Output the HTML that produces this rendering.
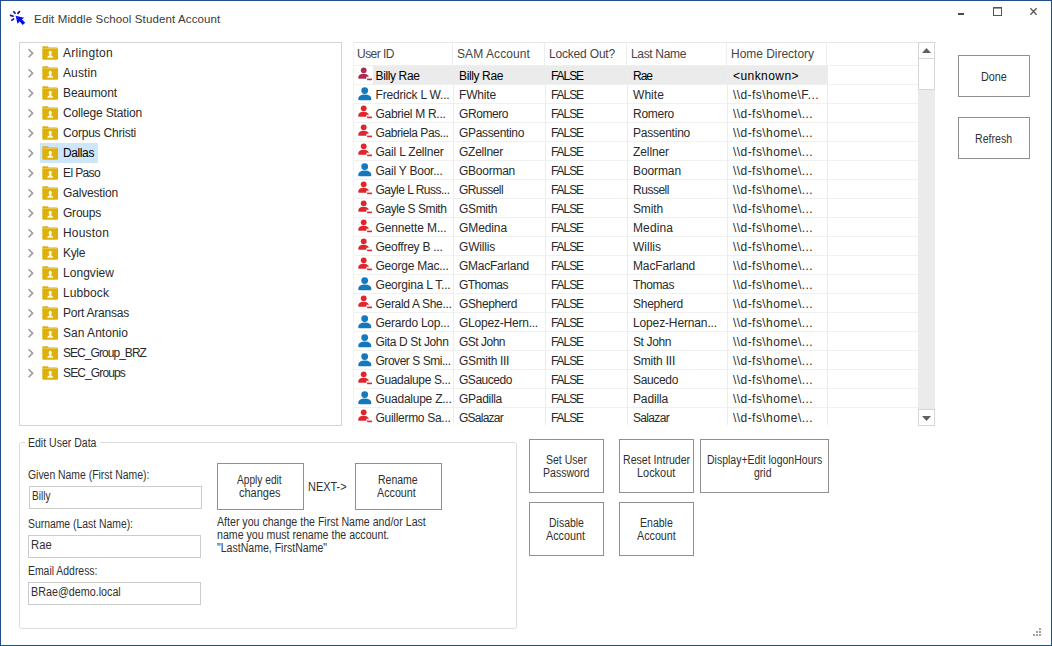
<!DOCTYPE html>
<html lang="en"><head><meta charset="utf-8"><title>Edit Middle School Student Account</title>
<style>
html,body{margin:0;padding:0;background:#fff;}
body{width:1052px;height:646px;overflow:hidden;position:relative;font-family:"Liberation Sans",sans-serif;}
div{box-sizing:border-box;}
#win{position:absolute;left:0;top:0;width:1052px;height:646px;border:1px solid #1f4d8d;background:#fff;}
.t{position:absolute;font-family:"Liberation Sans",sans-serif;line-height:16px;white-space:pre;transform-origin:0 0;}
.b{position:absolute;border:1px solid #909090;background:#fff;}
.i{position:absolute;border:1px solid #cccccc;background:#fff;}
.h{position:absolute;background:#f0f0f0;height:1px;}
.v{position:absolute;background:#ededed;width:1px;}
svg{position:absolute;overflow:visible;}
</style></head><body>
<div id="win"></div>
<svg style="left:0;top:0" width="40" height="30" viewBox="0 0 40 30">
<path d="M15.6 15.8 L24.2 17.7 L21.9 19.3 L25.2 22.7 L22.7 25.0 L19.7 21.6 L17.5 23.8 Z" fill="#0a0cf0"/>
<g stroke="#1212a8" stroke-width="1.7">
<line x1="13.3" y1="11.2" x2="15.5" y2="13.8"/><line x1="19.9" y1="11.2" x2="17.5" y2="13.8"/>
<line x1="10.0" y1="15.1" x2="13.7" y2="16.5"/><line x1="11.2" y1="20.6" x2="14.2" y2="18.6"/>
</g></svg>
<svg style="left:957px;top:5px" width="90" height="18" viewBox="0 0 90 18">
<rect x="1" y="8" width="6" height="2" fill="#4a4a4a"/>
<rect x="36.5" y="2.5" width="8" height="8" fill="none" stroke="#555" stroke-width="1"/><rect x="36" y="2" width="9" height="1.6" fill="#555"/>
<path d="M73.4 3.2 L79.6 9.8 M79.6 3.2 L73.4 9.8" stroke="#555" stroke-width="1.25" fill="none"/>
</svg>
<div style="position:absolute;left:19px;top:42px;width:323px;height:384px;border:1px solid #d4d4d4;background:#fff"></div>
<svg style="left:28px;top:49px" width="6" height="9" viewBox="0 0 6 9"><path d="M0.6 0.3 L4.6 4.3 L0.6 8.3" fill="none" stroke="#999" stroke-width="1.6"/></svg><svg style="left:42px;top:46px" width="16" height="14" viewBox="0 0 16 14"><path d="M0.3 1.2 Q0.3 0.2 1.3 0.2 H5.2 Q6 0.2 6.4 0.9 L6.8 1.6 H14.6 Q15.8 1.6 16 2.8 V12.8 Q16 13.8 15 13.8 H1.3 Q0.3 13.8 0.3 12.8 Z" fill="#deb00c"/><path d="M0.8 2.4 H15.2" stroke="#ecca55" stroke-width="0.9"/><ellipse cx="8.25" cy="6.7" rx="1.55" ry="1.9" fill="#fffbe8"/><path d="M5.2 11.8 Q5.3 9.7 7.2 9.4 L7.4 8 H9.1 L9.3 9.4 Q11.1 9.7 11.2 11.8 Z" fill="#fffbe8"/></svg>
<svg style="left:28px;top:69px" width="6" height="9" viewBox="0 0 6 9"><path d="M0.6 0.3 L4.6 4.3 L0.6 8.3" fill="none" stroke="#999" stroke-width="1.6"/></svg><svg style="left:42px;top:66px" width="16" height="14" viewBox="0 0 16 14"><path d="M0.3 1.2 Q0.3 0.2 1.3 0.2 H5.2 Q6 0.2 6.4 0.9 L6.8 1.6 H14.6 Q15.8 1.6 16 2.8 V12.8 Q16 13.8 15 13.8 H1.3 Q0.3 13.8 0.3 12.8 Z" fill="#deb00c"/><path d="M0.8 2.4 H15.2" stroke="#ecca55" stroke-width="0.9"/><ellipse cx="8.25" cy="6.7" rx="1.55" ry="1.9" fill="#fffbe8"/><path d="M5.2 11.8 Q5.3 9.7 7.2 9.4 L7.4 8 H9.1 L9.3 9.4 Q11.1 9.7 11.2 11.8 Z" fill="#fffbe8"/></svg>
<svg style="left:28px;top:89px" width="6" height="9" viewBox="0 0 6 9"><path d="M0.6 0.3 L4.6 4.3 L0.6 8.3" fill="none" stroke="#999" stroke-width="1.6"/></svg><svg style="left:42px;top:86px" width="16" height="14" viewBox="0 0 16 14"><path d="M0.3 1.2 Q0.3 0.2 1.3 0.2 H5.2 Q6 0.2 6.4 0.9 L6.8 1.6 H14.6 Q15.8 1.6 16 2.8 V12.8 Q16 13.8 15 13.8 H1.3 Q0.3 13.8 0.3 12.8 Z" fill="#deb00c"/><path d="M0.8 2.4 H15.2" stroke="#ecca55" stroke-width="0.9"/><ellipse cx="8.25" cy="6.7" rx="1.55" ry="1.9" fill="#fffbe8"/><path d="M5.2 11.8 Q5.3 9.7 7.2 9.4 L7.4 8 H9.1 L9.3 9.4 Q11.1 9.7 11.2 11.8 Z" fill="#fffbe8"/></svg>
<svg style="left:28px;top:109px" width="6" height="9" viewBox="0 0 6 9"><path d="M0.6 0.3 L4.6 4.3 L0.6 8.3" fill="none" stroke="#999" stroke-width="1.6"/></svg><svg style="left:42px;top:106px" width="16" height="14" viewBox="0 0 16 14"><path d="M0.3 1.2 Q0.3 0.2 1.3 0.2 H5.2 Q6 0.2 6.4 0.9 L6.8 1.6 H14.6 Q15.8 1.6 16 2.8 V12.8 Q16 13.8 15 13.8 H1.3 Q0.3 13.8 0.3 12.8 Z" fill="#deb00c"/><path d="M0.8 2.4 H15.2" stroke="#ecca55" stroke-width="0.9"/><ellipse cx="8.25" cy="6.7" rx="1.55" ry="1.9" fill="#fffbe8"/><path d="M5.2 11.8 Q5.3 9.7 7.2 9.4 L7.4 8 H9.1 L9.3 9.4 Q11.1 9.7 11.2 11.8 Z" fill="#fffbe8"/></svg>
<svg style="left:28px;top:129px" width="6" height="9" viewBox="0 0 6 9"><path d="M0.6 0.3 L4.6 4.3 L0.6 8.3" fill="none" stroke="#999" stroke-width="1.6"/></svg><svg style="left:42px;top:126px" width="16" height="14" viewBox="0 0 16 14"><path d="M0.3 1.2 Q0.3 0.2 1.3 0.2 H5.2 Q6 0.2 6.4 0.9 L6.8 1.6 H14.6 Q15.8 1.6 16 2.8 V12.8 Q16 13.8 15 13.8 H1.3 Q0.3 13.8 0.3 12.8 Z" fill="#deb00c"/><path d="M0.8 2.4 H15.2" stroke="#ecca55" stroke-width="0.9"/><ellipse cx="8.25" cy="6.7" rx="1.55" ry="1.9" fill="#fffbe8"/><path d="M5.2 11.8 Q5.3 9.7 7.2 9.4 L7.4 8 H9.1 L9.3 9.4 Q11.1 9.7 11.2 11.8 Z" fill="#fffbe8"/></svg>
<div style="position:absolute;left:40px;top:143px;width:58px;height:20px;background:#cde6f9"></div><svg style="left:28px;top:149px" width="6" height="9" viewBox="0 0 6 9"><path d="M0.6 0.3 L4.6 4.3 L0.6 8.3" fill="none" stroke="#999" stroke-width="1.6"/></svg><svg style="left:42px;top:146px" width="16" height="14" viewBox="0 0 16 14"><path d="M0.3 1.2 Q0.3 0.2 1.3 0.2 H5.2 Q6 0.2 6.4 0.9 L6.8 1.6 H14.6 Q15.8 1.6 16 2.8 V12.8 Q16 13.8 15 13.8 H1.3 Q0.3 13.8 0.3 12.8 Z" fill="#deb00c"/><path d="M0.8 2.4 H15.2" stroke="#ecca55" stroke-width="0.9"/><ellipse cx="8.25" cy="6.7" rx="1.55" ry="1.9" fill="#fffbe8"/><path d="M5.2 11.8 Q5.3 9.7 7.2 9.4 L7.4 8 H9.1 L9.3 9.4 Q11.1 9.7 11.2 11.8 Z" fill="#fffbe8"/></svg>
<svg style="left:28px;top:169px" width="6" height="9" viewBox="0 0 6 9"><path d="M0.6 0.3 L4.6 4.3 L0.6 8.3" fill="none" stroke="#999" stroke-width="1.6"/></svg><svg style="left:42px;top:166px" width="16" height="14" viewBox="0 0 16 14"><path d="M0.3 1.2 Q0.3 0.2 1.3 0.2 H5.2 Q6 0.2 6.4 0.9 L6.8 1.6 H14.6 Q15.8 1.6 16 2.8 V12.8 Q16 13.8 15 13.8 H1.3 Q0.3 13.8 0.3 12.8 Z" fill="#deb00c"/><path d="M0.8 2.4 H15.2" stroke="#ecca55" stroke-width="0.9"/><ellipse cx="8.25" cy="6.7" rx="1.55" ry="1.9" fill="#fffbe8"/><path d="M5.2 11.8 Q5.3 9.7 7.2 9.4 L7.4 8 H9.1 L9.3 9.4 Q11.1 9.7 11.2 11.8 Z" fill="#fffbe8"/></svg>
<svg style="left:28px;top:189px" width="6" height="9" viewBox="0 0 6 9"><path d="M0.6 0.3 L4.6 4.3 L0.6 8.3" fill="none" stroke="#999" stroke-width="1.6"/></svg><svg style="left:42px;top:186px" width="16" height="14" viewBox="0 0 16 14"><path d="M0.3 1.2 Q0.3 0.2 1.3 0.2 H5.2 Q6 0.2 6.4 0.9 L6.8 1.6 H14.6 Q15.8 1.6 16 2.8 V12.8 Q16 13.8 15 13.8 H1.3 Q0.3 13.8 0.3 12.8 Z" fill="#deb00c"/><path d="M0.8 2.4 H15.2" stroke="#ecca55" stroke-width="0.9"/><ellipse cx="8.25" cy="6.7" rx="1.55" ry="1.9" fill="#fffbe8"/><path d="M5.2 11.8 Q5.3 9.7 7.2 9.4 L7.4 8 H9.1 L9.3 9.4 Q11.1 9.7 11.2 11.8 Z" fill="#fffbe8"/></svg>
<svg style="left:28px;top:209px" width="6" height="9" viewBox="0 0 6 9"><path d="M0.6 0.3 L4.6 4.3 L0.6 8.3" fill="none" stroke="#999" stroke-width="1.6"/></svg><svg style="left:42px;top:206px" width="16" height="14" viewBox="0 0 16 14"><path d="M0.3 1.2 Q0.3 0.2 1.3 0.2 H5.2 Q6 0.2 6.4 0.9 L6.8 1.6 H14.6 Q15.8 1.6 16 2.8 V12.8 Q16 13.8 15 13.8 H1.3 Q0.3 13.8 0.3 12.8 Z" fill="#deb00c"/><path d="M0.8 2.4 H15.2" stroke="#ecca55" stroke-width="0.9"/><ellipse cx="8.25" cy="6.7" rx="1.55" ry="1.9" fill="#fffbe8"/><path d="M5.2 11.8 Q5.3 9.7 7.2 9.4 L7.4 8 H9.1 L9.3 9.4 Q11.1 9.7 11.2 11.8 Z" fill="#fffbe8"/></svg>
<svg style="left:28px;top:229px" width="6" height="9" viewBox="0 0 6 9"><path d="M0.6 0.3 L4.6 4.3 L0.6 8.3" fill="none" stroke="#999" stroke-width="1.6"/></svg><svg style="left:42px;top:226px" width="16" height="14" viewBox="0 0 16 14"><path d="M0.3 1.2 Q0.3 0.2 1.3 0.2 H5.2 Q6 0.2 6.4 0.9 L6.8 1.6 H14.6 Q15.8 1.6 16 2.8 V12.8 Q16 13.8 15 13.8 H1.3 Q0.3 13.8 0.3 12.8 Z" fill="#deb00c"/><path d="M0.8 2.4 H15.2" stroke="#ecca55" stroke-width="0.9"/><ellipse cx="8.25" cy="6.7" rx="1.55" ry="1.9" fill="#fffbe8"/><path d="M5.2 11.8 Q5.3 9.7 7.2 9.4 L7.4 8 H9.1 L9.3 9.4 Q11.1 9.7 11.2 11.8 Z" fill="#fffbe8"/></svg>
<svg style="left:28px;top:249px" width="6" height="9" viewBox="0 0 6 9"><path d="M0.6 0.3 L4.6 4.3 L0.6 8.3" fill="none" stroke="#999" stroke-width="1.6"/></svg><svg style="left:42px;top:246px" width="16" height="14" viewBox="0 0 16 14"><path d="M0.3 1.2 Q0.3 0.2 1.3 0.2 H5.2 Q6 0.2 6.4 0.9 L6.8 1.6 H14.6 Q15.8 1.6 16 2.8 V12.8 Q16 13.8 15 13.8 H1.3 Q0.3 13.8 0.3 12.8 Z" fill="#deb00c"/><path d="M0.8 2.4 H15.2" stroke="#ecca55" stroke-width="0.9"/><ellipse cx="8.25" cy="6.7" rx="1.55" ry="1.9" fill="#fffbe8"/><path d="M5.2 11.8 Q5.3 9.7 7.2 9.4 L7.4 8 H9.1 L9.3 9.4 Q11.1 9.7 11.2 11.8 Z" fill="#fffbe8"/></svg>
<svg style="left:28px;top:269px" width="6" height="9" viewBox="0 0 6 9"><path d="M0.6 0.3 L4.6 4.3 L0.6 8.3" fill="none" stroke="#999" stroke-width="1.6"/></svg><svg style="left:42px;top:266px" width="16" height="14" viewBox="0 0 16 14"><path d="M0.3 1.2 Q0.3 0.2 1.3 0.2 H5.2 Q6 0.2 6.4 0.9 L6.8 1.6 H14.6 Q15.8 1.6 16 2.8 V12.8 Q16 13.8 15 13.8 H1.3 Q0.3 13.8 0.3 12.8 Z" fill="#deb00c"/><path d="M0.8 2.4 H15.2" stroke="#ecca55" stroke-width="0.9"/><ellipse cx="8.25" cy="6.7" rx="1.55" ry="1.9" fill="#fffbe8"/><path d="M5.2 11.8 Q5.3 9.7 7.2 9.4 L7.4 8 H9.1 L9.3 9.4 Q11.1 9.7 11.2 11.8 Z" fill="#fffbe8"/></svg>
<svg style="left:28px;top:289px" width="6" height="9" viewBox="0 0 6 9"><path d="M0.6 0.3 L4.6 4.3 L0.6 8.3" fill="none" stroke="#999" stroke-width="1.6"/></svg><svg style="left:42px;top:286px" width="16" height="14" viewBox="0 0 16 14"><path d="M0.3 1.2 Q0.3 0.2 1.3 0.2 H5.2 Q6 0.2 6.4 0.9 L6.8 1.6 H14.6 Q15.8 1.6 16 2.8 V12.8 Q16 13.8 15 13.8 H1.3 Q0.3 13.8 0.3 12.8 Z" fill="#deb00c"/><path d="M0.8 2.4 H15.2" stroke="#ecca55" stroke-width="0.9"/><ellipse cx="8.25" cy="6.7" rx="1.55" ry="1.9" fill="#fffbe8"/><path d="M5.2 11.8 Q5.3 9.7 7.2 9.4 L7.4 8 H9.1 L9.3 9.4 Q11.1 9.7 11.2 11.8 Z" fill="#fffbe8"/></svg>
<svg style="left:28px;top:309px" width="6" height="9" viewBox="0 0 6 9"><path d="M0.6 0.3 L4.6 4.3 L0.6 8.3" fill="none" stroke="#999" stroke-width="1.6"/></svg><svg style="left:42px;top:306px" width="16" height="14" viewBox="0 0 16 14"><path d="M0.3 1.2 Q0.3 0.2 1.3 0.2 H5.2 Q6 0.2 6.4 0.9 L6.8 1.6 H14.6 Q15.8 1.6 16 2.8 V12.8 Q16 13.8 15 13.8 H1.3 Q0.3 13.8 0.3 12.8 Z" fill="#deb00c"/><path d="M0.8 2.4 H15.2" stroke="#ecca55" stroke-width="0.9"/><ellipse cx="8.25" cy="6.7" rx="1.55" ry="1.9" fill="#fffbe8"/><path d="M5.2 11.8 Q5.3 9.7 7.2 9.4 L7.4 8 H9.1 L9.3 9.4 Q11.1 9.7 11.2 11.8 Z" fill="#fffbe8"/></svg>
<svg style="left:28px;top:329px" width="6" height="9" viewBox="0 0 6 9"><path d="M0.6 0.3 L4.6 4.3 L0.6 8.3" fill="none" stroke="#999" stroke-width="1.6"/></svg><svg style="left:42px;top:326px" width="16" height="14" viewBox="0 0 16 14"><path d="M0.3 1.2 Q0.3 0.2 1.3 0.2 H5.2 Q6 0.2 6.4 0.9 L6.8 1.6 H14.6 Q15.8 1.6 16 2.8 V12.8 Q16 13.8 15 13.8 H1.3 Q0.3 13.8 0.3 12.8 Z" fill="#deb00c"/><path d="M0.8 2.4 H15.2" stroke="#ecca55" stroke-width="0.9"/><ellipse cx="8.25" cy="6.7" rx="1.55" ry="1.9" fill="#fffbe8"/><path d="M5.2 11.8 Q5.3 9.7 7.2 9.4 L7.4 8 H9.1 L9.3 9.4 Q11.1 9.7 11.2 11.8 Z" fill="#fffbe8"/></svg>
<svg style="left:28px;top:349px" width="6" height="9" viewBox="0 0 6 9"><path d="M0.6 0.3 L4.6 4.3 L0.6 8.3" fill="none" stroke="#999" stroke-width="1.6"/></svg><svg style="left:42px;top:346px" width="16" height="14" viewBox="0 0 16 14"><path d="M0.3 1.2 Q0.3 0.2 1.3 0.2 H5.2 Q6 0.2 6.4 0.9 L6.8 1.6 H14.6 Q15.8 1.6 16 2.8 V12.8 Q16 13.8 15 13.8 H1.3 Q0.3 13.8 0.3 12.8 Z" fill="#deb00c"/><path d="M0.8 2.4 H15.2" stroke="#ecca55" stroke-width="0.9"/><ellipse cx="8.25" cy="6.7" rx="1.55" ry="1.9" fill="#fffbe8"/><path d="M5.2 11.8 Q5.3 9.7 7.2 9.4 L7.4 8 H9.1 L9.3 9.4 Q11.1 9.7 11.2 11.8 Z" fill="#fffbe8"/></svg>
<svg style="left:28px;top:369px" width="6" height="9" viewBox="0 0 6 9"><path d="M0.6 0.3 L4.6 4.3 L0.6 8.3" fill="none" stroke="#999" stroke-width="1.6"/></svg><svg style="left:42px;top:366px" width="16" height="14" viewBox="0 0 16 14"><path d="M0.3 1.2 Q0.3 0.2 1.3 0.2 H5.2 Q6 0.2 6.4 0.9 L6.8 1.6 H14.6 Q15.8 1.6 16 2.8 V12.8 Q16 13.8 15 13.8 H1.3 Q0.3 13.8 0.3 12.8 Z" fill="#deb00c"/><path d="M0.8 2.4 H15.2" stroke="#ecca55" stroke-width="0.9"/><ellipse cx="8.25" cy="6.7" rx="1.55" ry="1.9" fill="#fffbe8"/><path d="M5.2 11.8 Q5.3 9.7 7.2 9.4 L7.4 8 H9.1 L9.3 9.4 Q11.1 9.7 11.2 11.8 Z" fill="#fffbe8"/></svg>
<div style="position:absolute;left:353px;top:42px;width:583px;height:385px;border-top:1px solid #e8e8e8;border-left:1px solid #f3f3f3;background:#fff"></div>
<div style="position:absolute;left:373px;top:66px;width:454px;height:18px;background:#ebebeb"></div>
<div class="h" style="left:354px;top:65px;width:564px"></div><div class="h" style="left:354px;top:84px;width:564px"></div><div class="h" style="left:354px;top:103px;width:564px"></div><div class="h" style="left:354px;top:122px;width:564px"></div><div class="h" style="left:354px;top:141px;width:564px"></div><div class="h" style="left:354px;top:160px;width:564px"></div><div class="h" style="left:354px;top:179px;width:564px"></div><div class="h" style="left:354px;top:198px;width:564px"></div><div class="h" style="left:354px;top:217px;width:564px"></div><div class="h" style="left:354px;top:236px;width:564px"></div><div class="h" style="left:354px;top:255px;width:564px"></div><div class="h" style="left:354px;top:274px;width:564px"></div><div class="h" style="left:354px;top:293px;width:564px"></div><div class="h" style="left:354px;top:312px;width:564px"></div><div class="h" style="left:354px;top:331px;width:564px"></div><div class="h" style="left:354px;top:350px;width:564px"></div><div class="h" style="left:354px;top:369px;width:564px"></div><div class="h" style="left:354px;top:388px;width:564px"></div><div class="h" style="left:354px;top:407px;width:564px"></div><div class="v" style="left:452px;top:43px;height:22px"></div><div class="v" style="left:453px;top:65px;height:360px"></div><div class="v" style="left:544px;top:43px;height:22px"></div><div class="v" style="left:545px;top:65px;height:360px"></div><div class="v" style="left:626px;top:43px;height:22px"></div><div class="v" style="left:627px;top:65px;height:360px"></div><div class="v" style="left:726px;top:43px;height:22px"></div><div class="v" style="left:727px;top:65px;height:360px"></div><div class="v" style="left:826px;top:43px;height:22px"></div><div class="v" style="left:827px;top:65px;height:360px"></div>
<svg style="left:357px;top:66px" width="16" height="16" viewBox="0 0 16 16"><circle cx="6.7" cy="4.3" r="2.9" fill="#ab2c52"/><path d="M1.2 11.8 Q1.4 7.8 6.7 7.8 Q10.8 7.8 12 10.8 H9.4 V12.8 H2 Q1.2 12.8 1.2 11.8 Z" fill="#ab2c52"/><rect x="10.1" y="12.6" width="4.9" height="1.6" fill="#ab2c52"/></svg><svg style="left:357px;top:85px" width="16" height="16" viewBox="0 0 16 16"><circle cx="7.7" cy="5.6" r="3.4" fill="#1478be"/><path d="M1.2 14 Q1.4 9.4 7.8 9.4 Q14.2 9.4 14.4 14 Q14.4 15.3 13 15.3 H2.6 Q1.2 15.3 1.2 14 Z" fill="#1478be"/></svg><svg style="left:357px;top:104px" width="16" height="16" viewBox="0 0 16 16"><circle cx="6.7" cy="4.3" r="2.9" fill="#e0262c"/><path d="M1.2 11.8 Q1.4 7.8 6.7 7.8 Q10.8 7.8 12 10.8 H9.4 V12.8 H2 Q1.2 12.8 1.2 11.8 Z" fill="#e0262c"/><rect x="10.1" y="12.6" width="4.9" height="1.6" fill="#e0262c"/></svg><svg style="left:357px;top:123px" width="16" height="16" viewBox="0 0 16 16"><circle cx="6.7" cy="4.3" r="2.9" fill="#e0262c"/><path d="M1.2 11.8 Q1.4 7.8 6.7 7.8 Q10.8 7.8 12 10.8 H9.4 V12.8 H2 Q1.2 12.8 1.2 11.8 Z" fill="#e0262c"/><rect x="10.1" y="12.6" width="4.9" height="1.6" fill="#e0262c"/></svg><svg style="left:357px;top:142px" width="16" height="16" viewBox="0 0 16 16"><circle cx="6.7" cy="4.3" r="2.9" fill="#e0262c"/><path d="M1.2 11.8 Q1.4 7.8 6.7 7.8 Q10.8 7.8 12 10.8 H9.4 V12.8 H2 Q1.2 12.8 1.2 11.8 Z" fill="#e0262c"/><rect x="10.1" y="12.6" width="4.9" height="1.6" fill="#e0262c"/></svg><svg style="left:357px;top:161px" width="16" height="16" viewBox="0 0 16 16"><circle cx="7.7" cy="5.6" r="3.4" fill="#1478be"/><path d="M1.2 14 Q1.4 9.4 7.8 9.4 Q14.2 9.4 14.4 14 Q14.4 15.3 13 15.3 H2.6 Q1.2 15.3 1.2 14 Z" fill="#1478be"/></svg><svg style="left:357px;top:180px" width="16" height="16" viewBox="0 0 16 16"><circle cx="6.7" cy="4.3" r="2.9" fill="#e0262c"/><path d="M1.2 11.8 Q1.4 7.8 6.7 7.8 Q10.8 7.8 12 10.8 H9.4 V12.8 H2 Q1.2 12.8 1.2 11.8 Z" fill="#e0262c"/><rect x="10.1" y="12.6" width="4.9" height="1.6" fill="#e0262c"/></svg><svg style="left:357px;top:199px" width="16" height="16" viewBox="0 0 16 16"><circle cx="6.7" cy="4.3" r="2.9" fill="#e0262c"/><path d="M1.2 11.8 Q1.4 7.8 6.7 7.8 Q10.8 7.8 12 10.8 H9.4 V12.8 H2 Q1.2 12.8 1.2 11.8 Z" fill="#e0262c"/><rect x="10.1" y="12.6" width="4.9" height="1.6" fill="#e0262c"/></svg><svg style="left:357px;top:218px" width="16" height="16" viewBox="0 0 16 16"><circle cx="6.7" cy="4.3" r="2.9" fill="#e0262c"/><path d="M1.2 11.8 Q1.4 7.8 6.7 7.8 Q10.8 7.8 12 10.8 H9.4 V12.8 H2 Q1.2 12.8 1.2 11.8 Z" fill="#e0262c"/><rect x="10.1" y="12.6" width="4.9" height="1.6" fill="#e0262c"/></svg><svg style="left:357px;top:237px" width="16" height="16" viewBox="0 0 16 16"><circle cx="6.7" cy="4.3" r="2.9" fill="#e0262c"/><path d="M1.2 11.8 Q1.4 7.8 6.7 7.8 Q10.8 7.8 12 10.8 H9.4 V12.8 H2 Q1.2 12.8 1.2 11.8 Z" fill="#e0262c"/><rect x="10.1" y="12.6" width="4.9" height="1.6" fill="#e0262c"/></svg><svg style="left:357px;top:256px" width="16" height="16" viewBox="0 0 16 16"><circle cx="6.7" cy="4.3" r="2.9" fill="#e0262c"/><path d="M1.2 11.8 Q1.4 7.8 6.7 7.8 Q10.8 7.8 12 10.8 H9.4 V12.8 H2 Q1.2 12.8 1.2 11.8 Z" fill="#e0262c"/><rect x="10.1" y="12.6" width="4.9" height="1.6" fill="#e0262c"/></svg><svg style="left:357px;top:275px" width="16" height="16" viewBox="0 0 16 16"><circle cx="7.7" cy="5.6" r="3.4" fill="#1478be"/><path d="M1.2 14 Q1.4 9.4 7.8 9.4 Q14.2 9.4 14.4 14 Q14.4 15.3 13 15.3 H2.6 Q1.2 15.3 1.2 14 Z" fill="#1478be"/></svg><svg style="left:357px;top:294px" width="16" height="16" viewBox="0 0 16 16"><circle cx="6.7" cy="4.3" r="2.9" fill="#e0262c"/><path d="M1.2 11.8 Q1.4 7.8 6.7 7.8 Q10.8 7.8 12 10.8 H9.4 V12.8 H2 Q1.2 12.8 1.2 11.8 Z" fill="#e0262c"/><rect x="10.1" y="12.6" width="4.9" height="1.6" fill="#e0262c"/></svg><svg style="left:357px;top:313px" width="16" height="16" viewBox="0 0 16 16"><circle cx="7.7" cy="5.6" r="3.4" fill="#1478be"/><path d="M1.2 14 Q1.4 9.4 7.8 9.4 Q14.2 9.4 14.4 14 Q14.4 15.3 13 15.3 H2.6 Q1.2 15.3 1.2 14 Z" fill="#1478be"/></svg><svg style="left:357px;top:332px" width="16" height="16" viewBox="0 0 16 16"><circle cx="7.7" cy="5.6" r="3.4" fill="#1478be"/><path d="M1.2 14 Q1.4 9.4 7.8 9.4 Q14.2 9.4 14.4 14 Q14.4 15.3 13 15.3 H2.6 Q1.2 15.3 1.2 14 Z" fill="#1478be"/></svg><svg style="left:357px;top:351px" width="16" height="16" viewBox="0 0 16 16"><circle cx="7.7" cy="5.6" r="3.4" fill="#1478be"/><path d="M1.2 14 Q1.4 9.4 7.8 9.4 Q14.2 9.4 14.4 14 Q14.4 15.3 13 15.3 H2.6 Q1.2 15.3 1.2 14 Z" fill="#1478be"/></svg><svg style="left:357px;top:370px" width="16" height="16" viewBox="0 0 16 16"><circle cx="6.7" cy="4.3" r="2.9" fill="#e0262c"/><path d="M1.2 11.8 Q1.4 7.8 6.7 7.8 Q10.8 7.8 12 10.8 H9.4 V12.8 H2 Q1.2 12.8 1.2 11.8 Z" fill="#e0262c"/><rect x="10.1" y="12.6" width="4.9" height="1.6" fill="#e0262c"/></svg><svg style="left:357px;top:389px" width="16" height="16" viewBox="0 0 16 16"><circle cx="7.7" cy="5.6" r="3.4" fill="#1478be"/><path d="M1.2 14 Q1.4 9.4 7.8 9.4 Q14.2 9.4 14.4 14 Q14.4 15.3 13 15.3 H2.6 Q1.2 15.3 1.2 14 Z" fill="#1478be"/></svg><svg style="left:357px;top:408px" width="16" height="16" viewBox="0 0 16 16"><circle cx="6.7" cy="4.3" r="2.9" fill="#e0262c"/><path d="M1.2 11.8 Q1.4 7.8 6.7 7.8 Q10.8 7.8 12 10.8 H9.4 V12.8 H2 Q1.2 12.8 1.2 11.8 Z" fill="#e0262c"/><rect x="10.1" y="12.6" width="4.9" height="1.6" fill="#e0262c"/></svg>
<div style="position:absolute;left:918px;top:43px;width:17px;height:383px;background:#ebebeb"></div>
<div style="position:absolute;left:918px;top:42px;width:17px;height:17px;background:#fff;border:1px solid #d6d6d6"></div>
<div style="position:absolute;left:918px;top:58px;width:17px;height:32px;background:#fff;border:1px solid #d6d6d6"></div>
<div style="position:absolute;left:918px;top:409px;width:17px;height:17px;background:#fff;border:1px solid #d6d6d6"></div>
<svg style="left:922px;top:48px" width="9" height="5" viewBox="0 0 9 5"><path d="M0 5 L4.5 0 L9 5 Z" fill="#606060"/></svg>
<svg style="left:922px;top:416px" width="9" height="5" viewBox="0 0 9 5"><path d="M0 0 L4.5 5 L9 0 Z" fill="#606060"/></svg>
<div class="b" style="left:958px;top:55px;width:72px;height:42px"></div><div class="b" style="left:958px;top:117px;width:72px;height:42px"></div>
<div style="position:absolute;left:19px;top:442px;width:498px;height:187px;border:1px solid #dcdcdc;border-radius:3px"></div>
<div style="position:absolute;left:25px;top:438px;width:75px;height:10px;background:#fff"></div>
<div class="i" style="left:29px;top:486px;width:173px;height:23px"></div><div class="i" style="left:28px;top:535px;width:173px;height:23px"></div><div class="i" style="left:28px;top:582px;width:173px;height:23px"></div>
<div class="b" style="left:217px;top:463px;width:87px;height:47px"></div><div class="b" style="left:355px;top:463px;width:87px;height:47px"></div><div class="b" style="left:529px;top:439px;width:75px;height:54px"></div><div class="b" style="left:619px;top:439px;width:75px;height:54px"></div><div class="b" style="left:700px;top:439px;width:129px;height:54px"></div><div class="b" style="left:529px;top:502px;width:75px;height:54px"></div><div class="b" style="left:619px;top:502px;width:75px;height:54px"></div>
<div class="t" style="left:34.10px;top:11px;font-size:11.5px;letter-spacing:0.120px;color:#3a3a3a">Edit Middle School Student Account</div>
<div class="t" style="left:63.00px;top:45px;font-size:12px;letter-spacing:0.292px;color:#2a2a2a">Arlington</div>
<div class="t" style="left:63.00px;top:65px;font-size:12px;letter-spacing:0.107px;color:#2a2a2a">Austin</div>
<div class="t" style="left:63.00px;top:85px;font-size:12px;letter-spacing:-0.088px;color:#2a2a2a">Beaumont</div>
<div class="t" style="left:63.00px;top:105px;font-size:12px;letter-spacing:-0.159px;color:#2a2a2a">College Station</div>
<div class="t" style="left:63.00px;top:125px;font-size:12px;letter-spacing:-0.217px;color:#2a2a2a">Corpus Christi</div>
<div class="t" style="left:63.00px;top:145px;font-size:12px;letter-spacing:-0.393px;color:#000">Dallas</div>
<div class="t" style="left:63.00px;top:165px;font-size:12px;letter-spacing:-0.623px;color:#2a2a2a">El Paso</div>
<div class="t" style="left:63.00px;top:185px;font-size:12px;letter-spacing:-0.170px;color:#2a2a2a">Galvestion</div>
<div class="t" style="left:63.00px;top:205px;font-size:12px;letter-spacing:-0.227px;color:#2a2a2a">Groups</div>
<div class="t" style="left:63.00px;top:225px;font-size:12px;letter-spacing:0.185px;color:#2a2a2a">Houston</div>
<div class="t" style="left:63.00px;top:245px;font-size:12px;letter-spacing:-0.336px;color:#2a2a2a">Kyle</div>
<div class="t" style="left:63.00px;top:265px;font-size:12px;letter-spacing:0.037px;color:#2a2a2a">Longview</div>
<div class="t" style="left:63.00px;top:285px;font-size:12px;letter-spacing:0.089px;color:#2a2a2a">Lubbock</div>
<div class="t" style="left:63.00px;top:305px;font-size:12px;letter-spacing:-0.225px;color:#2a2a2a">Port Aransas</div>
<div class="t" style="left:63.00px;top:325px;font-size:12px;letter-spacing:0.024px;color:#2a2a2a">San Antonio</div>
<div class="t" style="left:63.00px;top:345px;font-size:12px;letter-spacing:-0.952px;color:#2a2a2a">SEC_Group_BRZ</div>
<div class="t" style="left:63.00px;top:365px;font-size:12px;letter-spacing:-0.870px;color:#2a2a2a">SEC_Groups</div>
<div class="t" style="left:357.00px;top:46px;font-size:12px;letter-spacing:-0.525px;color:#454545">User ID</div>
<div class="t" style="left:457.00px;top:46px;font-size:12px;letter-spacing:0.087px;color:#454545">SAM Account</div>
<div class="t" style="left:549.00px;top:46px;font-size:12px;letter-spacing:-0.186px;color:#454545">Locked Out?</div>
<div class="t" style="left:631.00px;top:46px;font-size:12px;letter-spacing:-0.337px;color:#454545">Last Name</div>
<div class="t" style="left:731.00px;top:46px;font-size:12px;letter-spacing:-0.026px;color:#454545">Home Directory</div>
<div class="t" style="left:375.50px;top:68px;font-size:12px;letter-spacing:-0.373px;color:#000">Billy Rae</div>
<div class="t" style="left:459.00px;top:68px;font-size:12px;letter-spacing:-0.373px;color:#000">Billy Rae</div>
<div class="t" style="left:551.00px;top:68px;font-size:12px;letter-spacing:-1.072px;color:#000">FALSE</div>
<div class="t" style="left:633.00px;top:68px;font-size:12px;letter-spacing:-1.005px;color:#000">Rae</div>
<div class="t" style="left:733.00px;top:68px;font-size:12px;letter-spacing:0.438px;color:#000">&lt;unknown&gt;</div>
<div class="t" style="left:375.50px;top:87px;font-size:12px;letter-spacing:-0.194px;color:#2a2a2a">Fredrick L W...</div>
<div class="t" style="left:459.00px;top:87px;font-size:12px;letter-spacing:-0.169px;color:#2a2a2a">FWhite</div>
<div class="t" style="left:551.00px;top:87px;font-size:12px;letter-spacing:-1.072px;color:#2a2a2a">FALSE</div>
<div class="t" style="left:633.00px;top:87px;font-size:12px;letter-spacing:0.062px;color:#2a2a2a">White</div>
<div class="t" style="left:733.00px;top:87px;font-size:12px;letter-spacing:0.415px;color:#2a2a2a">\\d-fs\home\F...</div>
<div class="t" style="left:375.50px;top:106px;font-size:12px;letter-spacing:-0.287px;color:#2a2a2a">Gabriel M R...</div>
<div class="t" style="left:459.00px;top:106px;font-size:12px;letter-spacing:-0.431px;color:#2a2a2a">GRomero</div>
<div class="t" style="left:551.00px;top:106px;font-size:12px;letter-spacing:-1.072px;color:#2a2a2a">FALSE</div>
<div class="t" style="left:633.00px;top:106px;font-size:12px;letter-spacing:-0.281px;color:#2a2a2a">Romero</div>
<div class="t" style="left:733.00px;top:106px;font-size:12px;letter-spacing:0.443px;color:#2a2a2a">\\d-fs\home\...</div>
<div class="t" style="left:375.50px;top:125px;font-size:12px;letter-spacing:-0.425px;color:#2a2a2a">Gabriela Pas...</div>
<div class="t" style="left:459.00px;top:125px;font-size:12px;letter-spacing:-0.338px;color:#2a2a2a">GPassentino</div>
<div class="t" style="left:551.00px;top:125px;font-size:12px;letter-spacing:-1.072px;color:#2a2a2a">FALSE</div>
<div class="t" style="left:633.00px;top:125px;font-size:12px;letter-spacing:-0.237px;color:#2a2a2a">Passentino</div>
<div class="t" style="left:733.00px;top:125px;font-size:12px;letter-spacing:0.443px;color:#2a2a2a">\\d-fs\home\...</div>
<div class="t" style="left:375.50px;top:144px;font-size:12px;letter-spacing:-0.209px;color:#2a2a2a">Gail L Zellner</div>
<div class="t" style="left:459.00px;top:144px;font-size:12px;letter-spacing:-0.252px;color:#2a2a2a">GZellner</div>
<div class="t" style="left:551.00px;top:144px;font-size:12px;letter-spacing:-1.072px;color:#2a2a2a">FALSE</div>
<div class="t" style="left:633.00px;top:144px;font-size:12px;letter-spacing:-0.098px;color:#2a2a2a">Zellner</div>
<div class="t" style="left:733.00px;top:144px;font-size:12px;letter-spacing:0.443px;color:#2a2a2a">\\d-fs\home\...</div>
<div class="t" style="left:375.50px;top:163px;font-size:12px;letter-spacing:-0.233px;color:#2a2a2a">Gail Y Boor...</div>
<div class="t" style="left:459.00px;top:163px;font-size:12px;letter-spacing:-0.254px;color:#2a2a2a">GBoorman</div>
<div class="t" style="left:551.00px;top:163px;font-size:12px;letter-spacing:-1.072px;color:#2a2a2a">FALSE</div>
<div class="t" style="left:633.00px;top:163px;font-size:12px;letter-spacing:-0.100px;color:#2a2a2a">Boorman</div>
<div class="t" style="left:733.00px;top:163px;font-size:12px;letter-spacing:0.443px;color:#2a2a2a">\\d-fs\home\...</div>
<div class="t" style="left:375.50px;top:182px;font-size:12px;letter-spacing:-0.506px;color:#2a2a2a">Gayle L Russ...</div>
<div class="t" style="left:459.00px;top:182px;font-size:12px;letter-spacing:-0.586px;color:#2a2a2a">GRussell</div>
<div class="t" style="left:551.00px;top:182px;font-size:12px;letter-spacing:-1.072px;color:#2a2a2a">FALSE</div>
<div class="t" style="left:633.00px;top:182px;font-size:12px;letter-spacing:-0.480px;color:#2a2a2a">Russell</div>
<div class="t" style="left:733.00px;top:182px;font-size:12px;letter-spacing:0.443px;color:#2a2a2a">\\d-fs\home\...</div>
<div class="t" style="left:375.50px;top:201px;font-size:12px;letter-spacing:-0.439px;color:#2a2a2a">Gayle S Smith</div>
<div class="t" style="left:459.00px;top:201px;font-size:12px;letter-spacing:-0.336px;color:#2a2a2a">GSmith</div>
<div class="t" style="left:551.00px;top:201px;font-size:12px;letter-spacing:-1.072px;color:#2a2a2a">FALSE</div>
<div class="t" style="left:633.00px;top:201px;font-size:12px;letter-spacing:-0.138px;color:#2a2a2a">Smith</div>
<div class="t" style="left:733.00px;top:201px;font-size:12px;letter-spacing:0.443px;color:#2a2a2a">\\d-fs\home\...</div>
<div class="t" style="left:375.50px;top:220px;font-size:12px;letter-spacing:-0.131px;color:#2a2a2a">Gennette M...</div>
<div class="t" style="left:459.00px;top:220px;font-size:12px;letter-spacing:-0.100px;color:#2a2a2a">GMedina</div>
<div class="t" style="left:551.00px;top:220px;font-size:12px;letter-spacing:-1.072px;color:#2a2a2a">FALSE</div>
<div class="t" style="left:633.00px;top:220px;font-size:12px;letter-spacing:0.107px;color:#2a2a2a">Medina</div>
<div class="t" style="left:733.00px;top:220px;font-size:12px;letter-spacing:0.443px;color:#2a2a2a">\\d-fs\home\...</div>
<div class="t" style="left:375.50px;top:239px;font-size:12px;letter-spacing:-0.249px;color:#2a2a2a">Geoffrey B ...</div>
<div class="t" style="left:459.00px;top:239px;font-size:12px;letter-spacing:-0.190px;color:#2a2a2a">GWillis</div>
<div class="t" style="left:551.00px;top:239px;font-size:12px;letter-spacing:-1.072px;color:#2a2a2a">FALSE</div>
<div class="t" style="left:633.00px;top:239px;font-size:12px;letter-spacing:0.000px;color:#2a2a2a">Willis</div>
<div class="t" style="left:733.00px;top:239px;font-size:12px;letter-spacing:0.443px;color:#2a2a2a">\\d-fs\home\...</div>
<div class="t" style="left:375.50px;top:258px;font-size:12px;letter-spacing:-0.233px;color:#2a2a2a">George Mac...</div>
<div class="t" style="left:459.00px;top:258px;font-size:12px;letter-spacing:-0.246px;color:#2a2a2a">GMacFarland</div>
<div class="t" style="left:551.00px;top:258px;font-size:12px;letter-spacing:-1.072px;color:#2a2a2a">FALSE</div>
<div class="t" style="left:633.00px;top:258px;font-size:12px;letter-spacing:-0.136px;color:#2a2a2a">MacFarland</div>
<div class="t" style="left:733.00px;top:258px;font-size:12px;letter-spacing:0.443px;color:#2a2a2a">\\d-fs\home\...</div>
<div class="t" style="left:375.50px;top:277px;font-size:12px;letter-spacing:-0.203px;color:#2a2a2a">Georgina L T...</div>
<div class="t" style="left:459.00px;top:277px;font-size:12px;letter-spacing:-0.527px;color:#2a2a2a">GThomas</div>
<div class="t" style="left:551.00px;top:277px;font-size:12px;letter-spacing:-1.072px;color:#2a2a2a">FALSE</div>
<div class="t" style="left:633.00px;top:277px;font-size:12px;letter-spacing:-0.393px;color:#2a2a2a">Thomas</div>
<div class="t" style="left:733.00px;top:277px;font-size:12px;letter-spacing:0.443px;color:#2a2a2a">\\d-fs\home\...</div>
<div class="t" style="left:375.50px;top:296px;font-size:12px;letter-spacing:-0.315px;color:#2a2a2a">Gerald A She...</div>
<div class="t" style="left:459.00px;top:296px;font-size:12px;letter-spacing:-0.377px;color:#2a2a2a">GShepherd</div>
<div class="t" style="left:551.00px;top:296px;font-size:12px;letter-spacing:-1.072px;color:#2a2a2a">FALSE</div>
<div class="t" style="left:633.00px;top:296px;font-size:12px;letter-spacing:-0.256px;color:#2a2a2a">Shepherd</div>
<div class="t" style="left:733.00px;top:296px;font-size:12px;letter-spacing:0.443px;color:#2a2a2a">\\d-fs\home\...</div>
<div class="t" style="left:375.50px;top:315px;font-size:12px;letter-spacing:-0.242px;color:#2a2a2a">Gerardo Lop...</div>
<div class="t" style="left:459.00px;top:315px;font-size:12px;letter-spacing:-0.218px;color:#2a2a2a">GLopez-Hern...</div>
<div class="t" style="left:551.00px;top:315px;font-size:12px;letter-spacing:-1.072px;color:#2a2a2a">FALSE</div>
<div class="t" style="left:633.00px;top:315px;font-size:12px;letter-spacing:-0.138px;color:#2a2a2a">Lopez-Hernan...</div>
<div class="t" style="left:733.00px;top:315px;font-size:12px;letter-spacing:0.443px;color:#2a2a2a">\\d-fs\home\...</div>
<div class="t" style="left:375.50px;top:334px;font-size:12px;letter-spacing:-0.360px;color:#2a2a2a">Gita D St John</div>
<div class="t" style="left:459.00px;top:334px;font-size:12px;letter-spacing:-0.504px;color:#2a2a2a">GSt John</div>
<div class="t" style="left:551.00px;top:334px;font-size:12px;letter-spacing:-1.072px;color:#2a2a2a">FALSE</div>
<div class="t" style="left:633.00px;top:334px;font-size:12px;letter-spacing:-0.386px;color:#2a2a2a">St John</div>
<div class="t" style="left:733.00px;top:334px;font-size:12px;letter-spacing:0.443px;color:#2a2a2a">\\d-fs\home\...</div>
<div class="t" style="left:375.50px;top:353px;font-size:12px;letter-spacing:-0.468px;color:#2a2a2a">Grover S Smi...</div>
<div class="t" style="left:459.00px;top:353px;font-size:12px;letter-spacing:-0.334px;color:#2a2a2a">GSmith III</div>
<div class="t" style="left:551.00px;top:353px;font-size:12px;letter-spacing:-1.072px;color:#2a2a2a">FALSE</div>
<div class="t" style="left:633.00px;top:353px;font-size:12px;letter-spacing:-0.224px;color:#2a2a2a">Smith III</div>
<div class="t" style="left:733.00px;top:353px;font-size:12px;letter-spacing:0.443px;color:#2a2a2a">\\d-fs\home\...</div>
<div class="t" style="left:375.50px;top:372px;font-size:12px;letter-spacing:-0.362px;color:#2a2a2a">Guadalupe S...</div>
<div class="t" style="left:459.00px;top:372px;font-size:12px;letter-spacing:-0.465px;color:#2a2a2a">GSaucedo</div>
<div class="t" style="left:551.00px;top:372px;font-size:12px;letter-spacing:-1.072px;color:#2a2a2a">FALSE</div>
<div class="t" style="left:633.00px;top:372px;font-size:12px;letter-spacing:-0.339px;color:#2a2a2a">Saucedo</div>
<div class="t" style="left:733.00px;top:372px;font-size:12px;letter-spacing:0.443px;color:#2a2a2a">\\d-fs\home\...</div>
<div class="t" style="left:375.50px;top:391px;font-size:12px;letter-spacing:-0.242px;color:#2a2a2a">Guadalupe Z...</div>
<div class="t" style="left:459.00px;top:391px;font-size:12px;letter-spacing:-0.295px;color:#2a2a2a">GPadilla</div>
<div class="t" style="left:551.00px;top:391px;font-size:12px;letter-spacing:-1.072px;color:#2a2a2a">FALSE</div>
<div class="t" style="left:633.00px;top:391px;font-size:12px;letter-spacing:-0.147px;color:#2a2a2a">Padilla</div>
<div class="t" style="left:733.00px;top:391px;font-size:12px;letter-spacing:0.443px;color:#2a2a2a">\\d-fs\home\...</div>
<div class="t" style="left:375.50px;top:410px;font-size:12px;letter-spacing:-0.291px;color:#2a2a2a">Guillermo Sa...</div>
<div class="t" style="left:459.00px;top:410px;font-size:12px;letter-spacing:-0.754px;color:#2a2a2a">GSalazar</div>
<div class="t" style="left:551.00px;top:410px;font-size:12px;letter-spacing:-1.072px;color:#2a2a2a">FALSE</div>
<div class="t" style="left:633.00px;top:410px;font-size:12px;letter-spacing:-0.670px;color:#2a2a2a">Salazar</div>
<div class="t" style="left:733.00px;top:410px;font-size:12px;letter-spacing:0.443px;color:#2a2a2a">\\d-fs\home\...</div>
<div class="t" style="left:980.70px;top:69px;font-size:12px;letter-spacing:0.000px;color:#303030;transform:scaleX(0.9028)">Done</div>
<div class="t" style="left:974.92px;top:131px;font-size:12px;letter-spacing:0.000px;color:#303030;transform:scaleX(0.8820)">Refresh</div>
<div class="t" style="left:27.82px;top:435px;font-size:12px;letter-spacing:0.000px;color:#303030;transform:scaleX(0.8766)">Edit User Data</div>
<div class="t" style="left:28.27px;top:467px;font-size:12px;letter-spacing:0.000px;color:#303030;transform:scaleX(0.8664)">Given Name (First Name):</div>
<div class="t" style="left:31.86px;top:488px;font-size:12px;letter-spacing:0.000px;color:#303030;transform:scaleX(0.8381)">Billy</div>
<div class="t" style="left:28.27px;top:516px;font-size:12px;letter-spacing:0.000px;color:#303030;transform:scaleX(0.8651)">Surname (Last Name):</div>
<div class="t" style="left:30.86px;top:537px;font-size:12px;letter-spacing:0.000px;color:#303030;transform:scaleX(0.9415)">Rae</div>
<div class="t" style="left:28.03px;top:563px;font-size:12px;letter-spacing:0.000px;color:#303030;transform:scaleX(0.8679)">Email Address:</div>
<div class="t" style="left:31.10px;top:584px;font-size:12px;letter-spacing:0.000px;color:#303030;transform:scaleX(0.8954)">BRae@demo.local</div>
<div class="t" style="left:237.20px;top:472px;font-size:12px;letter-spacing:0.000px;color:#303030;transform:scaleX(0.8474)">Apply edit</div>
<div class="t" style="left:239.24px;top:485px;font-size:12px;letter-spacing:0.000px;color:#303030;transform:scaleX(0.9169)">changes</div>
<div class="t" style="left:307.59px;top:479px;font-size:12px;letter-spacing:0.000px;color:#303030;transform:scaleX(0.9104)">NEXT-&gt;</div>
<div class="t" style="left:377.73px;top:472px;font-size:12px;letter-spacing:0.000px;color:#303030;transform:scaleX(0.8750)">Rename</div>
<div class="t" style="left:377.20px;top:485px;font-size:12px;letter-spacing:0.000px;color:#303030;transform:scaleX(0.8948)">Account</div>
<div class="t" style="left:217.30px;top:514px;font-size:12px;letter-spacing:0.000px;color:#303030;transform:scaleX(0.8843)">After you change the First Name and/or Last</div>
<div class="t" style="left:216.64px;top:527px;font-size:12px;letter-spacing:0.000px;color:#303030;transform:scaleX(0.8845)">name you must rename the account.</div>
<div class="t" style="left:217.06px;top:540px;font-size:12px;letter-spacing:0.000px;color:#303030;transform:scaleX(0.8789)">&quot;LastName, FirstName&quot;</div>
<div class="t" style="left:545.86px;top:452px;font-size:12px;letter-spacing:0.000px;color:#303030;transform:scaleX(0.8761)">Set User</div>
<div class="t" style="left:542.72px;top:465px;font-size:12px;letter-spacing:0.000px;color:#303030;transform:scaleX(0.8804)">Password</div>
<div class="t" style="left:622.62px;top:452px;font-size:12px;letter-spacing:0.000px;color:#303030;transform:scaleX(0.8827)">Reset Intruder</div>
<div class="t" style="left:636.89px;top:465px;font-size:12px;letter-spacing:0.000px;color:#303030;transform:scaleX(0.9098)">Lockout</div>
<div class="t" style="left:706.63px;top:452px;font-size:12px;letter-spacing:0.000px;color:#303030;transform:scaleX(0.8745)">Display+Edit logonHours</div>
<div class="t" style="left:753.56px;top:465px;font-size:12px;letter-spacing:0.000px;color:#303030;transform:scaleX(0.8747)">grid</div>
<div class="t" style="left:548.73px;top:515px;font-size:12px;letter-spacing:0.000px;color:#303030;transform:scaleX(0.8727)">Disable</div>
<div class="t" style="left:546.30px;top:528px;font-size:12px;letter-spacing:0.000px;color:#303030;transform:scaleX(0.8994)">Account</div>
<div class="t" style="left:639.72px;top:515px;font-size:12px;letter-spacing:0.000px;color:#303030;transform:scaleX(0.8778)">Enable</div>
<div class="t" style="left:636.50px;top:528px;font-size:12px;letter-spacing:0.000px;color:#303030;transform:scaleX(0.8948)">Account</div>
<svg style="left:1033px;top:628px" width="9" height="9" viewBox="0 0 9 9"><rect x="6" y="0" width="2" height="2" fill="#a0a0a0"/><rect x="3" y="3" width="2" height="2" fill="#a0a0a0"/><rect x="6" y="3" width="2" height="2" fill="#a0a0a0"/><rect x="0" y="6" width="2" height="2" fill="#a0a0a0"/><rect x="3" y="6" width="2" height="2" fill="#a0a0a0"/><rect x="6" y="6" width="2" height="2" fill="#a0a0a0"/></svg>
</body></html>
